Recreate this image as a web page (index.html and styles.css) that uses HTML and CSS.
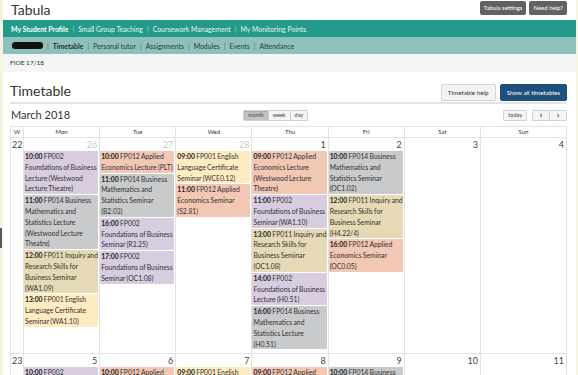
FILE: index.html
```html
<!DOCTYPE html>
<html lang="en">
<head>
  <meta charset="UTF-8">
  <meta name="viewport" content="width=device-width, initial-scale=1.0">
  <title>Tabula - Timetable</title>
  <link rel="stylesheet" href="styles.css">
</head>

<body>
  <div class="edge-tab"></div>

  <div class="page">
    <!-- Site header -->
    <header class="site-header">
      <div class="brand">Tabula</div>
      <div class="utility">
        <a class="util-btn">Tabula settings</a>
        <a class="util-btn">Need help?</a>
      </div>
    </header>

    <nav class="primary-nav">
      <a class="active">My Student Profile</a><span class="sep">|</span>
      <a>Small Group Teaching</a><span class="sep">|</span>
      <a>Coursework Management</a><span class="sep">|</span>
      <a>My Monitoring Points</a>
    </nav>

    <nav class="secondary-nav">
      <span class="redacted"></span><span class="sep">|</span>
      <a class="active">Timetable</a><span class="sep">|</span>
      <a>Personal tutor</a><span class="sep">|</span>
      <a>Assignments</a><span class="sep">|</span>
      <a>Modules</a><span class="sep">|</span>
      <a>Events</a><span class="sep">|</span>
      <a>Attendance</a>
    </nav>

    <div class="context-bar">FIOE 17/18</div>

    <main class="content">
      <div class="page-title">
        <h1>Timetable</h1>
        <div class="title-actions">
          <button class="btn">Timetable help</button>
          <button class="btn btn-primary">Show all timetables</button>
        </div>
      </div>

      <div class="cal-toolbar">
        <h2>March 2018</h2>
        <div class="btn-group">
          <button class="tb-btn pressed">month</button><button class="tb-btn">week</button><button class="tb-btn">day</button>
        </div>
        <div class="tb-right">
          <button class="tb-btn today">today</button>
          <div class="btn-group">
            <button class="tb-btn arrow">&lsaquo;</button><button class="tb-btn arrow">&rsaquo;</button>
          </div>
        </div>
      </div>

      <!-- Month grid -->
      <div class="calendar">
        <div class="cal-head">W</div>
        <div class="cal-head">Mon</div>
        <div class="cal-head">Tue</div>
        <div class="cal-head">Wed</div>
        <div class="cal-head">Thu</div>
        <div class="cal-head">Fri</div>
        <div class="cal-head">Sat</div>
        <div class="cal-head">Sun</div>

        <!-- week 22 -->
        <div class="week-num">22</div>
        <div class="day">
          <div class="day-num other">26</div>
          <div class="event purple"><b>10:00</b> FP002 Foundations of Business Lecture (Westwood Lecture Theatre)</div>
          <div class="event grey"><b>11:00</b> FP014 Business Mathematics and Statistics Lecture (Westwood Lecture Theatre)</div>
          <div class="event tan"><b>12:00</b> FP011 Inquiry and Research Skills for Business Seminar (WA1.09)</div>
          <div class="event yellow"><b>13:00</b> FP001 English Language Certificate Seminar (WA1.10)</div>
        </div>
        <div class="day">
          <div class="day-num other">27</div>
          <div class="event salmon"><b>10:00</b> FP012 Applied Economics Lecture (PLT)</div>
          <div class="event grey"><b>11:00</b> FP014 Business Mathematics and Statistics Seminar (B2.03)</div>
          <div class="event purple"><b>16:00</b> FP002 Foundations of Business Seminar (R3.25)</div>
          <div class="event purple"><b>17:00</b> FP002 Foundations of Business Seminar (OC1.08)</div>
        </div>
        <div class="day">
          <div class="day-num other">28</div>
          <div class="event yellow"><b>09:00</b> FP001 English Language Certificate Seminar (WCE0.12)</div>
          <div class="event salmon"><b>11:00</b> FP012 Applied Economics Seminar (S2.81)</div>
        </div>
        <div class="day">
          <div class="day-num">1</div>
          <div class="event salmon"><b>09:00</b> FP012 Applied Economics Lecture (Westwood Lecture Theatre)</div>
          <div class="event purple"><b>11:00</b> FP002 Foundations of Business Seminar (WA1.10)</div>
          <div class="event tan"><b>13:00</b> FP011 Inquiry and Research Skills for Business Seminar (OC1.08)</div>
          <div class="event purple"><b>14:00</b> FP002 Foundations of Business Lecture (H0.51)</div>
          <div class="event grey"><b>16:00</b> FP014 Business Mathematics and Statistics Lecture (H0.51)</div>
        </div>
        <div class="day">
          <div class="day-num">2</div>
          <div class="event grey"><b>10:00</b> FP014 Business Mathematics and Statistics Seminar (OC1.02)</div>
          <div class="event tan"><b>12:00</b> FP011 Inquiry and Research Skills for Business Seminar (H4.22/4)</div>
          <div class="event salmon"><b>16:00</b> FP012 Applied Economics Seminar (OC0.05)</div>
        </div>
        <div class="day">
          <div class="day-num">3</div>
        </div>
        <div class="day">
          <div class="day-num">4</div>
        </div>

        <!-- week 23 -->
        <div class="week-num">23</div>
        <div class="day">
          <div class="day-num">5</div>
          <div class="event purple"><b>10:00</b> FP002 Foundations of Business Lecture (Westwood Lecture Theatre)</div>
        </div>
        <div class="day">
          <div class="day-num">6</div>
          <div class="event salmon"><b>10:00</b> FP012 Applied Economics Lecture (PLT)</div>
        </div>
        <div class="day">
          <div class="day-num">7</div>
          <div class="event yellow"><b>09:00</b> FP001 English Language Certificate Seminar (WCE0.12)</div>
        </div>
        <div class="day">
          <div class="day-num">8</div>
          <div class="event salmon"><b>09:00</b> FP012 Applied Economics Lecture (Westwood Lecture Theatre)</div>
        </div>
        <div class="day">
          <div class="day-num">9</div>
          <div class="event grey"><b>10:00</b> FP014 Business Mathematics and Statistics Seminar (OC1.02)</div>
        </div>
        <div class="day">
          <div class="day-num">10</div>
        </div>
        <div class="day">
          <div class="day-num">11</div>
        </div>
      </div>
    </main>
  </div>
</body>

</html>
```

FILE: styles.css
```css
/* Global */
html,
body {
  height: 100%;
  overflow: hidden;
}

body {
  margin: 0;
  background-color: #f6f3e3;
  font-family: Lato, "Open Sans", sans-serif;
  color: #333;
}

.page {
  margin: 0 2px 0 3px;
  background: #fff;
  min-height: 100%;
}

/* little grey tab stuck to the left edge */
.edge-tab {
  position: fixed;
  left: 0;
  top: 228px;
  width: 2px;
  height: 20px;
  background: #5a5a5a;
}

/* Header */
.site-header {
  display: flex;
  justify-content: space-between;
  align-items: flex-start;
  height: 20px;
  padding: 0 9px 0 8px;
}

.brand {
  font-size: 14px;
  line-height: 17px;
  color: #333;
  padding-top: 1px;
}

.utility {
  display: flex;
  gap: 3px;
  padding-top: 1px;
}

.util-btn {
  background: #626262;
  color: #fff;
  font-size: 6px;
  height: 14px;
  line-height: 14px;
  padding: 0 4px;
  border-radius: 2px;
}

/* Nav bars */
.primary-nav,
.secondary-nav {
  display: flex;
  align-items: center;
  height: 17px;
  font-size: 6.9px;
  white-space: nowrap;
}

.primary-nav {
  background: #239a8a;
  color: #e3f3f0;
  padding-left: 8px;
}

.primary-nav .active {
  color: #fff;
  font-weight: bold;
}

.sep {
  margin: 0 4px;
  opacity: 0.6;
}

.secondary-nav {
  position: relative;
  background: #8fc1bb;
  color: #27403c;
  padding-left: 9px;
}

.secondary-nav .active {
  position: relative;
  font-weight: bold;
  color: #1f2f2d;
}

.secondary-nav .active::after {
  content: "";
  position: absolute;
  left: 50%;
  bottom: -7px;
  margin-left: -4px;
  border-left: 4px solid transparent;
  border-right: 4px solid transparent;
  border-bottom: 4px solid #f4f5f5;
}

.redacted {
  display: inline-block;
  width: 31px;
  height: 7px;
  background: #111;
  border-radius: 3px;
}

.context-bar {
  background: #f4f5f5;
  height: 18px;
  line-height: 18px;
  padding-left: 7px;
  font-size: 6.5px;
  color: #333;
}

/* Content */
.content {
  padding: 0 9px 0 7px;
}

.page-title {
  display: flex;
  justify-content: space-between;
  align-items: flex-end;
  padding: 10px 0 1px;
  border-bottom: 2px solid #e4e4e4;
}

h1 {
  margin: 0 0 2px;
  font-size: 14px;
  line-height: 17px;
  font-weight: normal;
  color: #333;
}

.title-actions {
  display: flex;
  gap: 4px;
}

.btn {
  font-family: inherit;
  font-size: 6.3px;
  height: 17px;
  padding: 0 6px;
  border: 1px solid #d4d4d4;
  border-radius: 2px;
  background: #f3f3f3;
  color: #333;
}

.btn-primary {
  background: #1f4f7b;
  border-color: #1f4f7b;
  color: #fff;
}

/* Calendar toolbar */
.cal-toolbar {
  display: grid;
  grid-template-columns: 234px auto 1fr;
  align-items: center;
  margin: 5px 0;
  height: 12px;
}

h2 {
  margin: 0 0 0 1px;
  font-size: 11px;
  line-height: 12px;
  font-weight: normal;
  color: #333;
}

.btn-group {
  display: flex;
}

.tb-btn {
  font-family: inherit;
  font-size: 5.5px;
  height: 11px;
  padding: 0 4px;
  border: 1px solid #d2d2d2;
  margin-left: -1px;
  background: #f5f5f5;
  color: #444;
  border-radius: 1px;
}

.tb-btn.pressed {
  background: #c4c4c4;
  box-shadow: inset 0 1px 2px rgba(0, 0, 0, 0.15);
}

.tb-right {
  display: flex;
  justify-content: flex-end;
  gap: 6px;
}

.tb-btn.arrow {
  width: 18px;
  font-size: 9px;
  line-height: 8px;
  font-weight: bold;
}

/* Month grid */
.calendar {
  display: grid;
  grid-template-columns: 13px repeat(6, 1fr) 86px;
  border-top: 1px solid #e2e2e2;
  border-left: 1px solid #e2e2e2;
}

.cal-head {
  height: 10px;
  line-height: 10px;
  font-size: 6px;
  text-align: center;
  color: #333;
  border-right: 1px solid #e2e2e2;
  border-bottom: 1px solid #e2e2e2;
}

.week-num,
.day {
  border-right: 1px solid #e2e2e2;
  border-bottom: 1px solid #e2e2e2;
}

.week-num {
  font-size: 9px;
  line-height: 13px;
  padding-left: 1px;
  color: #444;
}

.day {
  padding-bottom: 3px;
}

.day-num {
  font-size: 9px;
  line-height: 13px;
  text-align: right;
  padding-right: 2px;
  color: #444;
}

.day-num.other {
  color: #c9c9c9;
}

.event {
  margin: 0 1px 1px 0;
  padding: 0 0 0 1px;
  font-size: 6.8px;
  line-height: 10.8px;
  word-spacing: -0.4px;
  color: #333;
  border-radius: 1px;
}

.event b {
  color: #222;
}

.purple { background: #d8cce1; }
.grey { background: #c9cacb; }
.tan { background: #e6dab6; }
.yellow { background: #feebc1; }
.salmon { background: #f2c7b3; }
```
